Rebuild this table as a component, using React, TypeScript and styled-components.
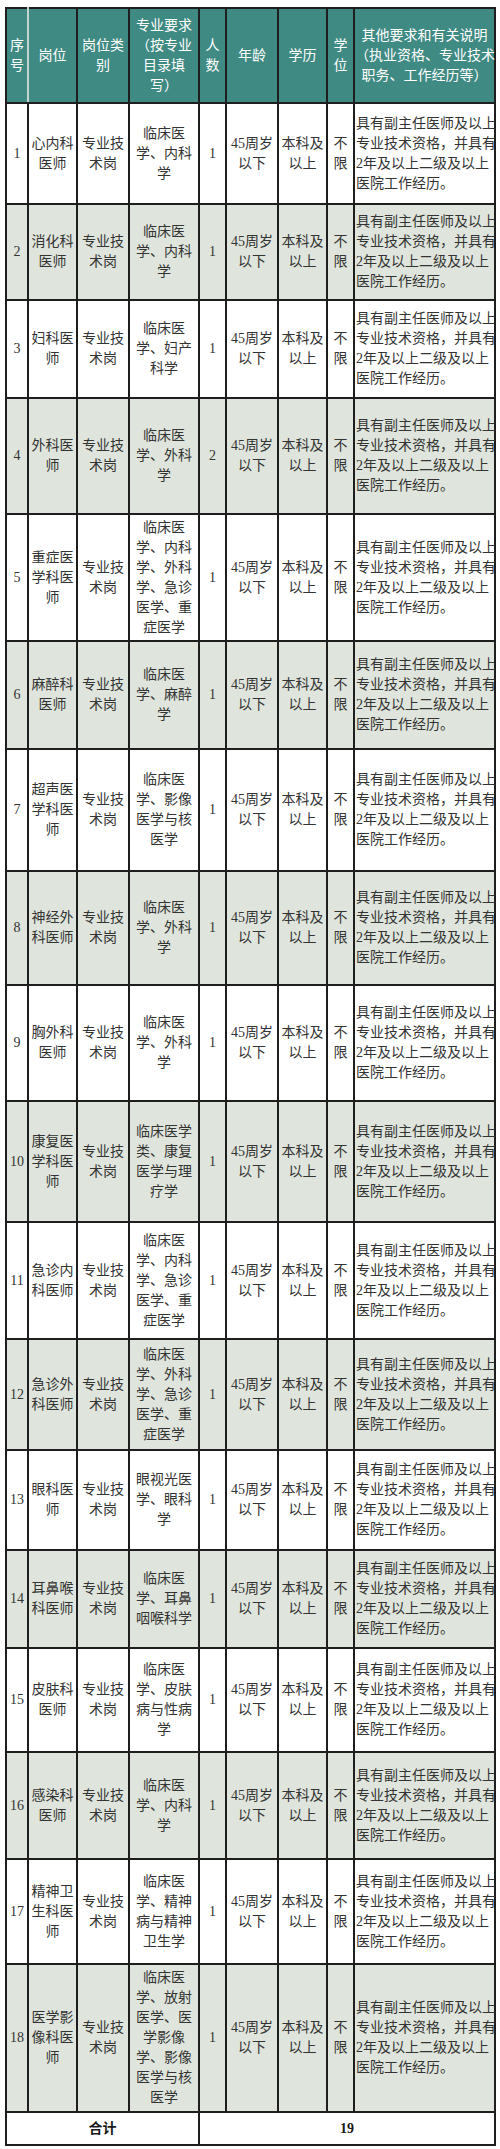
import styled, { createGlobalStyle } from "styled-components";

const GlobalStyle = createGlobalStyle`
  body {
    margin: 0;
    background: #ffffff;
  }
`;

const Page = styled.div`
  padding: 7px 4px 5px 5px;
`;

const Table = styled.table`
  width: 491px;
  border-collapse: collapse;
  table-layout: fixed;
  font-family: "Liberation Serif", "Noto Sans CJK SC", serif;
  font-size: 14px;
  line-height: 20px;
  color: #333333;
`;

const HeadRow = styled.tr`
  height: 95px;
  background: #3f8a83;
`;

const HeadCell = styled.th<{ $soft?: boolean }>`
  border: 2px solid #1e1e1e;
  border-right-color: ${(p) => (p.$soft ? "#c4d4d0" : "#1e1e1e")};
  padding: 0;
  color: #ffffff;
  font-weight: normal;
  text-align: center;
  vertical-align: middle;
  white-space: nowrap;
`;

const Row = styled.tr<{ $shade: boolean; $h: number }>`
  height: ${(p) => p.$h}px;
  background: ${(p) => (p.$shade ? "#dfe5dc" : "#ffffff")};
`;

const Cell = styled.td<{ $left?: boolean; $bold?: boolean }>`
  border: 2px solid #1e1e1e;
  padding: ${(p) => (p.$left ? "0 0 0 1px" : "0")};
  text-align: ${(p) => (p.$left ? "left" : "center")};
  vertical-align: middle;
  white-space: nowrap;
  font-weight: ${(p) => (p.$bold ? "bold" : "normal")};
  color: ${(p) => (p.$bold ? "#1a1a1a" : "#333333")};
`;

const Lines = ({ lines }: { lines: string[] }) => (
  <>
    {lines.map((l, i) => (
      <span key={i}>
        {i > 0 && <br />}
        {l}
      </span>
    ))}
  </>
);

const widths = [22, 49, 52, 70, 27, 52, 49, 27, 141];

const headers = [
  ["序", "号"],
  ["岗位"],
  ["岗位类", "别"],
  ["专业要求", "（按专业", "目录填", "写）"],
  ["人", "数"],
  ["年龄"],
  ["学历"],
  ["学", "位"],
  ["其他要求和有关说明", "（执业资格、专业技术", "职务、工作经历等）"],
];

const note = ["具有副主任医师及以上", "专业技术资格，并具有", "2年及以上二级及以上", "医院工作经历。"];

interface Post {
  post: string[];
  major: string[];
  count: number;
  h: number;
}

const posts: Post[] = [
  { post: ["心内科", "医师"], major: ["临床医", "学、内科", "学"], count: 1, h: 101 },
  { post: ["消化科", "医师"], major: ["临床医", "学、内科", "学"], count: 1, h: 96 },
  { post: ["妇科医", "师"], major: ["临床医", "学、妇产", "科学"], count: 1, h: 98 },
  { post: ["外科医", "师"], major: ["临床医", "学、外科", "学"], count: 2, h: 116 },
  { post: ["重症医", "学科医", "师"], major: ["临床医", "学、内科", "学、外科", "学、急诊", "医学、重", "症医学"], count: 1, h: 127 },
  { post: ["麻醉科", "医师"], major: ["临床医", "学、麻醉", "学"], count: 1, h: 108 },
  { post: ["超声医", "学科医", "师"], major: ["临床医", "学、影像", "医学与核", "医学"], count: 1, h: 122 },
  { post: ["神经外", "科医师"], major: ["临床医", "学、外科", "学"], count: 1, h: 114 },
  { post: ["胸外科", "医师"], major: ["临床医", "学、外科", "学"], count: 1, h: 116 },
  { post: ["康复医", "学科医", "师"], major: ["临床医学", "类、康复", "医学与理", "疗学"], count: 1, h: 121 },
  { post: ["急诊内", "科医师"], major: ["临床医", "学、内科", "学、急诊", "医学、重", "症医学"], count: 1, h: 117 },
  { post: ["急诊外", "科医师"], major: ["临床医", "学、外科", "学、急诊", "医学、重", "症医学"], count: 1, h: 111 },
  { post: ["眼科医", "师"], major: ["眼视光医", "学、眼科", "学"], count: 1, h: 100 },
  { post: ["耳鼻喉", "科医师"], major: ["临床医", "学、耳鼻", "咽喉科学"], count: 1, h: 98 },
  { post: ["皮肤科", "医师"], major: ["临床医", "学、皮肤", "病与性病", "学"], count: 1, h: 104 },
  { post: ["感染科", "医师"], major: ["临床医", "学、内科", "学"], count: 1, h: 107 },
  { post: ["精神卫", "生科医", "师"], major: ["临床医", "学、精神", "病与精神", "卫生学"], count: 1, h: 105 },
  { post: ["医学影", "像科医", "师"], major: ["临床医", "学、放射", "医学、医", "学影像", "学、影像", "医学与核", "医学"], count: 1, h: 148 },
];

const total = posts.reduce((s, p) => s + p.count, 0);

export default function App() {
  return (
    <Page>
      <GlobalStyle />
      <Table>
        <colgroup>
          {widths.map((w, i) => (
            <col key={i} style={{ width: w }} />
          ))}
        </colgroup>
        <thead>
          <HeadRow>
            {headers.map((h, i) => (
              <HeadCell key={i} $soft={i === 0}>
                <Lines lines={h} />
              </HeadCell>
            ))}
          </HeadRow>
        </thead>
        <tbody>
          {posts.map((p, i) => (
            <Row key={i} $shade={i % 2 === 1} $h={p.h}>
              <Cell>{i + 1}</Cell>
              <Cell>
                <Lines lines={p.post} />
              </Cell>
              <Cell>
                <Lines lines={["专业技", "术岗"]} />
              </Cell>
              <Cell>
                <Lines lines={p.major} />
              </Cell>
              <Cell>{p.count}</Cell>
              <Cell>
                <Lines lines={["45周岁", "以下"]} />
              </Cell>
              <Cell>
                <Lines lines={["本科及", "以上"]} />
              </Cell>
              <Cell>
                <Lines lines={["不", "限"]} />
              </Cell>
              <Cell $left>
                <Lines lines={note} />
              </Cell>
            </Row>
          ))}
          <Row $shade={false} $h={33}>
            <Cell colSpan={4} $bold>
              合计
            </Cell>
            <Cell colSpan={5} $bold>
              {total}
            </Cell>
          </Row>
        </tbody>
      </Table>
    </Page>
  );
}
